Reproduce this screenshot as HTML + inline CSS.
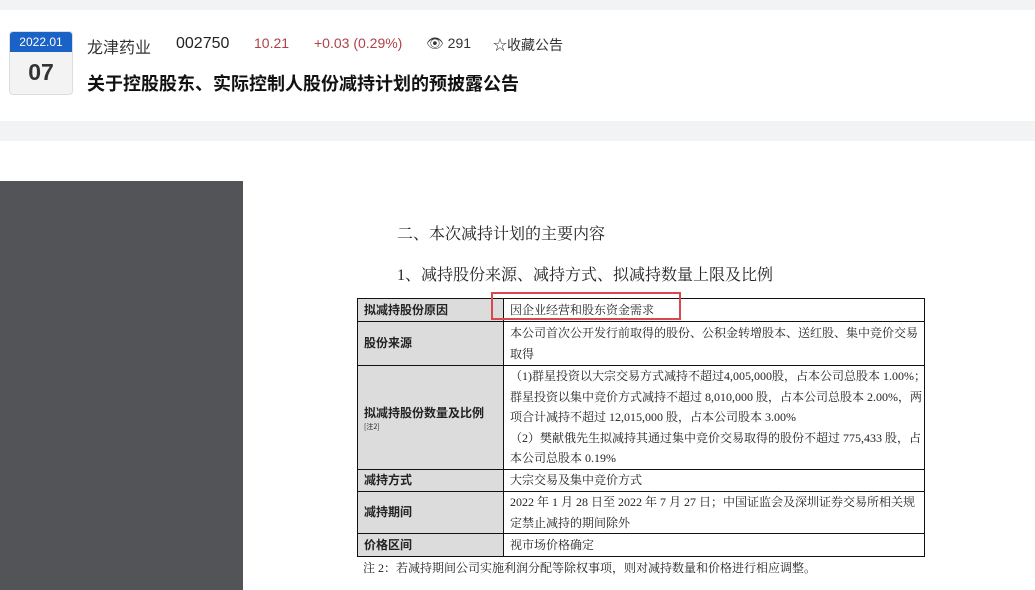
<!DOCTYPE html>
<html><head><meta charset="utf-8"><style>
*{margin:0;padding:0;box-sizing:border-box}
body{width:1035px;height:590px;overflow:hidden;background:#fff;position:relative;font-family:"Liberation Sans","Noto Sans CJK SC",sans-serif}
.a{position:absolute;white-space:nowrap}
.serif{font-family:"Liberation Serif","Noto Serif CJK SC",serif}
table{position:absolute;left:357px;top:298px;width:568px;border-collapse:collapse;font-family:"Liberation Serif","Noto Serif CJK SC",serif;font-size:12px;color:#222;table-layout:fixed}
td{border:1px solid #111;padding:0 6px;line-height:20.5px;vertical-align:middle;white-space:nowrap;overflow:hidden}
td.l{background:#dcdcdc;font-weight:bold;width:146px;font-family:"Noto Sans CJK SC",sans-serif;font-size:12px}
</style></head><body>
<div class="a" style="left:0;top:0;width:1035px;height:10px;background:#f2f3f4"></div>
<div class="a" style="left:0;top:121px;width:1035px;height:20px;background:#f2f3f4"></div>
<div class="a" style="left:9px;top:31px;width:64px;height:64px;background:#f3f3f3;border:1px solid #ddd;border-radius:4px;overflow:hidden">
<div style="height:20px;background:#1a62c6;color:#fff;font-size:12px;text-align:center;line-height:20px">2022.01</div>
<div style="text-align:center;font-size:23px;font-weight:bold;color:#333;line-height:40px">07</div></div>
<div class="a" style="left:87px;top:34px;font-size:16px;color:#333">龙津药业</div>
<div class="a" style="left:176px;top:35px;font-size:16px;color:#222">002750</div>
<div class="a" style="left:254px;top:35px;font-size:14px;color:#b0404a">10.21</div>
<div class="a" style="left:314px;top:35px;font-size:14px;color:#b0404a">+0.03 (0.29%)</div>
<div class="a" style="left:426px;top:35px;font-size:14px;color:#333">👁 291</div>
<div class="a" style="left:493px;top:35px;font-size:14px;color:#333">☆收藏公告</div>
<div class="a" style="left:87px;top:70px;font-size:18px;font-weight:bold;color:#111">关于控股股东、实际控制人股份减持计划的预披露公告</div>
<div class="a" style="left:0;top:181px;width:243px;height:409px;background:#525457"></div>
<div class="a serif" style="left:397px;top:221px;font-size:16px;color:#222">二、本次减持计划的主要内容</div>
<div class="a serif" style="left:397px;top:262px;font-size:16px;color:#222">1、减持股份来源、减持方式、拟减持数量上限及比例</div>
<table>
<colgroup><col style="width:146px"><col></colgroup>
<tr style="height:23px"><td class="l">拟减持股份原因</td><td>因企业经营和股东资金需求</td></tr>
<tr style="height:44px"><td class="l">股份来源</td><td>本公司首次公开发行前取得的股份、公积金转增股本、送红股、集中竞价交易<br>取得</td></tr>
<tr style="height:104px"><td class="l">拟减持股份数量及比例<br><span style="font-size:7px;font-weight:normal;line-height:9px;display:block">[注2]</span></td><td>（1)群星投资以大宗交易方式减持不超过4,005,000股，占本公司总股本 1.00%；<br>群星投资以集中竞价方式减持不超过 8,010,000 股，占本公司总股本 2.00%，两<br>项合计减持不超过 12,015,000 股，占本公司股本 3.00%<br>（2）樊献俄先生拟减持其通过集中竞价交易取得的股份不超过 775,433 股，占<br>本公司总股本 0.19%</td></tr>
<tr style="height:22px"><td class="l">减持方式</td><td>大宗交易及集中竞价方式</td></tr>
<tr style="height:42px"><td class="l">减持期间</td><td>2022 年 1 月 28 日至 2022 年 7 月 27 日；中国证监会及深圳证券交易所相关规<br>定禁止减持的期间除外</td></tr>
<tr style="height:23px"><td class="l">价格区间</td><td>视市场价格确定</td></tr>
</table>
<div class="a" style="left:491px;top:292px;width:190px;height:28px;border:2px solid #d9474f"></div>
<div class="a serif" style="left:363px;top:559px;font-size:12px;color:#222">注 2：若减持期间公司实施利润分配等除权事项，则对减持数量和价格进行相应调整。</div>
</body></html>
